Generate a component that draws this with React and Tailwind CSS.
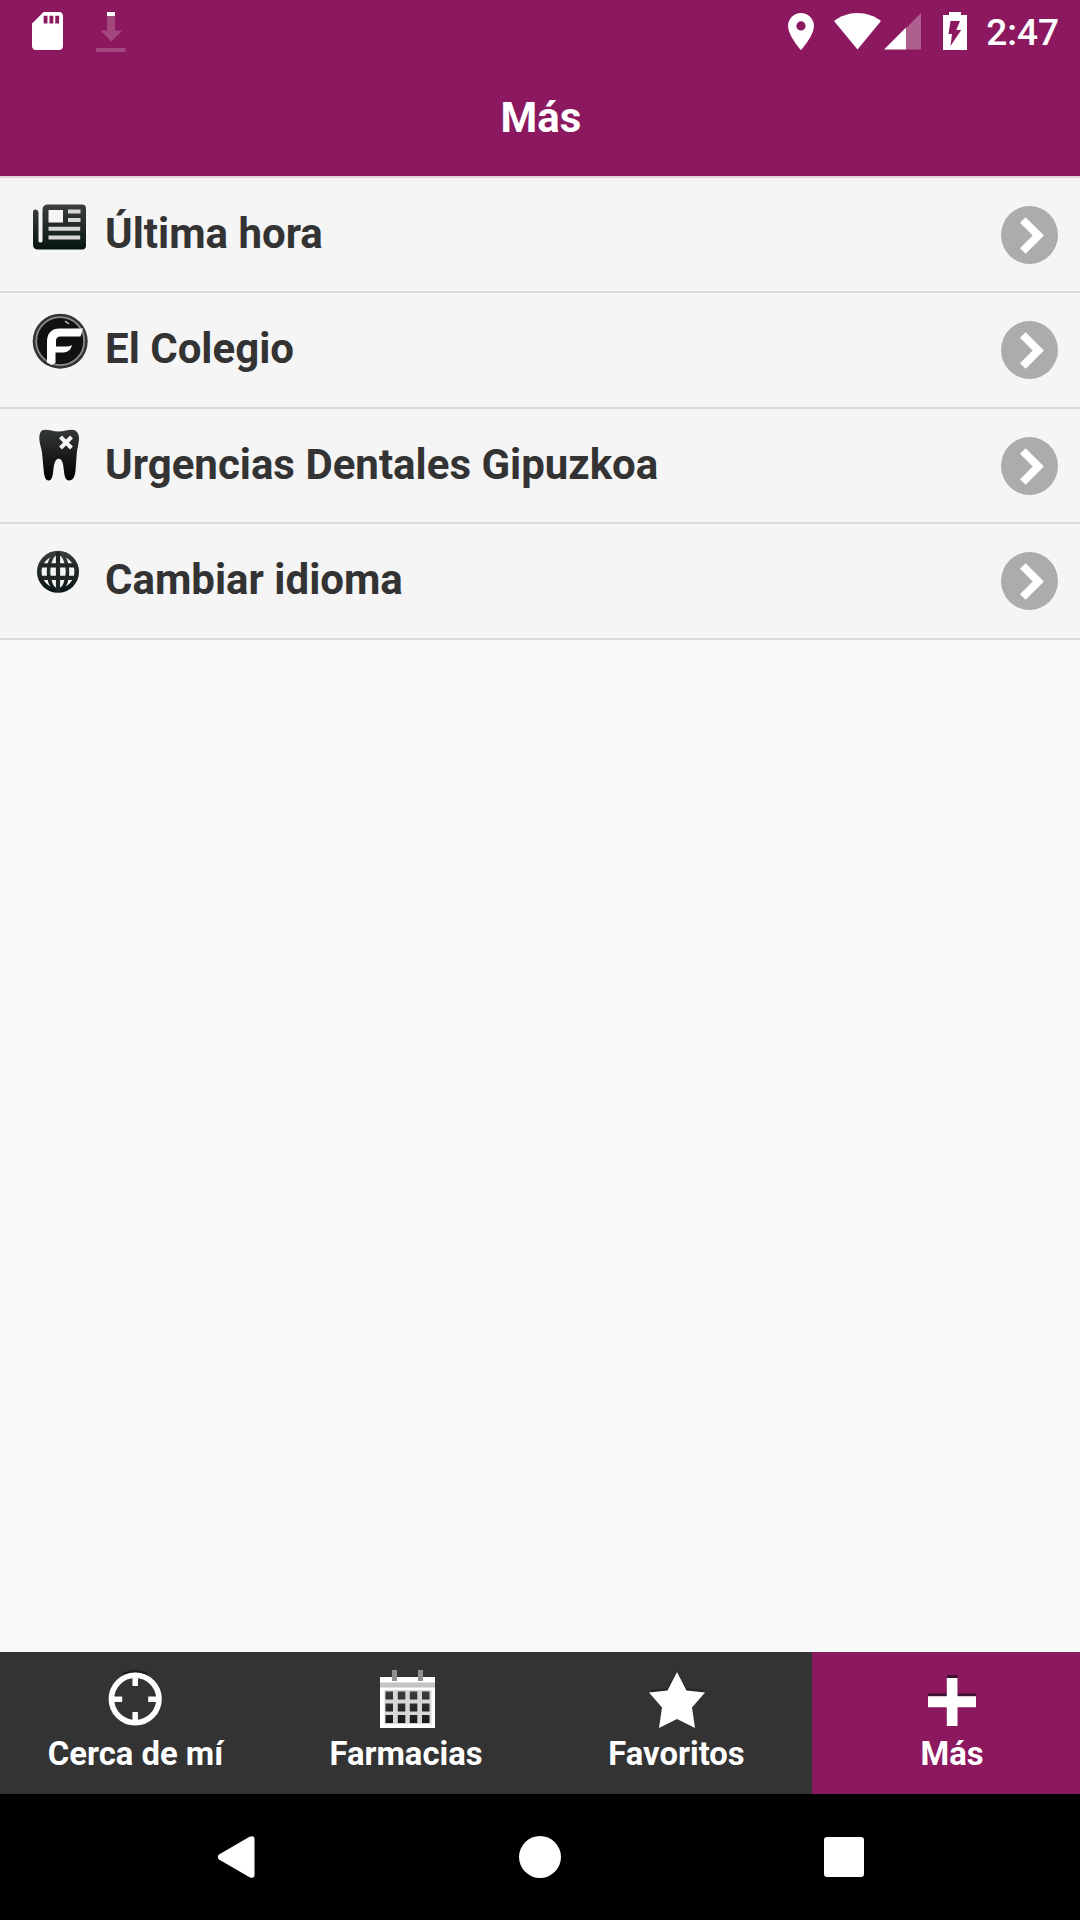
import React, { useState } from 'react';

const SdCardIcon = () => (
  <svg className="w-[31px] h-[38px]" viewBox="4 2 16 20" preserveAspectRatio="none" fill="#fff">
    <path d="M18 2h-8L4.02 8 4 20c0 1.1.9 2 2 2h12c1.1 0 2-.9 2-2V4c0-1.1-.9-2-2-2zm-6 6h-2V4h2v4zm3 0h-2V4h2v4zm3 0h-2V4h2v4z" />
  </svg>
);

const DownloadIcon = () => (
  <svg className="w-[30px] h-[40px]" viewBox="0 0 30 40" fill="#fff">
    <path d="M11 0h8v4h-8z" />
    <path fillOpacity="0.2" d="M11 4h8v14.500h7.500L15.200 29.500 4.500 18.500H11zM0 36h29.500v4H0z" />
  </svg>
);

const PlaceIcon = () => (
  <svg className="w-[26px] h-[37px]" viewBox="5 2 14 20" fill="#fff">
    <path d="M12 2C8.130 2 5 5.130 5 9c0 5.250 7 13 7 13s7-7.750 7-13c0-3.870-3.130-7-7-7zm0 9.500a2.500 2.500 0 0 1 0-5 2.500 2.500 0 0 1 0 5z" />
  </svg>
);

const WifiIcon = () => (
  <svg className="w-[47px] h-[37px]" viewBox="0 0 47 37" fill="#fff">
    <path d="M23.500 36.500 0 8C6.500 3 14.500 0 23.500 0S40.500 3 47 8z" />
  </svg>
);

const SignalIcon = () => (
  <svg className="w-[37px] h-[37px]" viewBox="0 0 37 37" fill="#fff">
    <path fillOpacity="0.3" d="M22 15 37 0v36.500H22z" />
    <path d="M0 36.500 22 14.500v22z" />
  </svg>
);

const BatteryIcon = () => (
  <svg className="w-[24px] h-[38px]" viewBox="0 0 24 38" fill="#fff" fillRule="evenodd">
    <path d="M6 0h12v3h6v35H0V3h6zM7.500 9h9.500l-3.700 9h5L7.500 34l1.500-12H5.500z" />
  </svg>
);

const NewsIcon = () => (
  <svg className="w-14 h-14" viewBox="0 0 56 56" fill="none">
    <defs>
      <linearGradient id="news" x1="0" y1="0" x2="0" y2="1">
        <stop offset="0" stopColor="#3c3e3e" />
        <stop offset="1" stopColor="#061512" />
      </linearGradient>
    </defs>
    <path fill="url(#news)" d="M16 6.500h34q4 0 4 4v37q0 4-4 4H6q-5 0-5-5V14q0-2.500 2.500-2.500T6.500 14v29q0 1.500 2 1.500t2-1.500V12q0-5.500 5.500-5.500z" />
    <path fill="#f5f5f5" d="M16.500 12h14.500v12.500H16.500z" />
    <path fill="#d8d8d8" d="M36 11.500h12.500v4H36zM36 20h12.500v4H36zM16.500 28.800h31.700v4H16.500zM16.500 37.500h31.700v4H16.500z" />
  </svg>
);

const ColegioIcon = () => (
  <svg className="w-14 h-14" viewBox="0 0 56 56" fill="none">
    <circle cx="28.200" cy="28.200" r="27.500" fill="#333" />
    <circle cx="28.200" cy="28.200" r="24" fill="#111" stroke="#8c8c8c" strokeWidth="1.800" />
    <path fill="#fff" d="M51 15.500 48.500 23.500H28.500q-4.500 0-4.500 4.500v5.500h10q3.500 0 6-1.500-1.500 7-8 7.500H23.500V50l-4 2L15 49.500V29q0-13.500 13-13.500z" />
    <path stroke="#ccc" strokeWidth="1.200" d="m33 8 4 3" />
  </svg>
);

const ToothIcon = () => (
  <svg className="w-14 h-14" viewBox="0 0 56 56" fill="none">
    <defs>
      <linearGradient id="tooth" x1="0" y1="0" x2="0" y2="1">
        <stop offset="0" stopColor="#353838" />
        <stop offset="1" stopColor="#000" />
      </linearGradient>
    </defs>
    <path fill="url(#tooth)" d="M13 .8c5 0 8 1.700 13.500 1.700S36 .8 40 .8s7 3 7 8.700c0 5-1.800 9-2.200 15l-1.300 17c-.5 6-2.500 10-6.500 10-3.600 0-4.500-4.500-5-9-.7-7-1.500-12.700-5.300-12.700s-4.700 5.700-5.500 12.700c-.6 4.500-1.300 9-4.500 9-3.400 0-4.500-4-5-10l-1.600-17c-.6-6-2.800-10-2.800-15C7.300 4 9 .8 13 .8z" />
    <path stroke="#f5f5f5" strokeWidth="4" d="m28.500 8 11 11M39.500 8l-11 11" />
  </svg>
);

const GlobeIcon = () => (
  <svg className="w-14 h-14" viewBox="0 0 56 56" fill="none">
    <defs>
      <linearGradient id="globe" x1="0" y1="0" x2="0" y2="1">
        <stop offset="0" stopColor="#3a3c3c" />
        <stop offset="1" stopColor="#081716" />
      </linearGradient>
    </defs>
    <circle cx="26" cy="27.800" r="18.700" stroke="url(#globe)" strokeWidth="4.600" />
    <ellipse cx="26" cy="27.800" rx="9.500" ry="18.500" stroke="url(#globe)" strokeWidth="3.500" />
    <path stroke="#202626" strokeWidth="4.200" d="M26 8v39.500M9 21.300h34M9 33.800h34" />
  </svg>
);

const ArrowIcon = () => (
  <svg className="w-[57px] h-[58px]" viewBox="0 0 57 58" fill="none">
    <ellipse cx="28.500" cy="29" rx="28.500" ry="29" fill="#acacac" />
    <path stroke="#fff" strokeWidth="8" d="M21.800 14 37.300 29.500 21.800 45" />
  </svg>
);

const TargetIcon = () => (
  <svg className="w-14 h-[58px]" viewBox="0.8 0 56 58" fill="none" stroke="#fff">
    <path stroke="#1c1c1c" strokeWidth="2" d="M16 4a27 27 0 0 1 24 0" />
    <circle cx="28" cy="29" r="23.800" strokeWidth="5.600" />
    <path strokeWidth="5.500" d="M28 5v11M28 42v11M4 29.300h11M41 29.300h11" />
  </svg>
);

const CalendarIcon = () => (
  <svg className="w-14 h-[58px] overflow-visible" viewBox="0 0 56 58">
    <defs>
      <linearGradient id="cells" x1="0" y1="21" x2="0" y2="53" gradientUnits="userSpaceOnUse">
        <stop offset="0" stopColor="#3c3c3c" />
        <stop offset="1" stopColor="#181818" />
      </linearGradient>
    </defs>
    <path fill="#fff" d="M2 7h55v51H2z" />
    <path fill="#c4c4c4" d="M2 12.500h55v5H2z" />
    <path fill="#d6d6d6" d="M6.500 20h47v34h-47z" />
    <path fill="#909090" d="M14 0h5v11h-5zM40 0h5v11h-5z" />
    <path
      fill="url(#cells)"
      d="M7.500 21.500h7.500v8H7.500zM19.800 21.500h7.500v8h-7.500zM31.800 21.500h7.500v8h-7.500zM44 21.500h7.500v8H44zM7.500 33.500h7.500v8H7.500zM19.800 33.500h7.500v8h-7.500zM31.800 33.500h7.500v8h-7.500zM44 33.500h7.500v8H44zM7.500 45h7.500v8H7.500zM19.800 45h7.500v8h-7.500zM31.800 45h7.500v8h-7.500zM44 45h7.500v8H44z"
    />
  </svg>
);

const StarIcon = () => (
  <svg className="w-14 h-[58px] overflow-visible" viewBox="1 0 56 58">
    <path fill="#262626" d="m29 0 9 18 17 2v3H3v-3l17-2z" />
    <path fill="#fff" d="m29 2 9.500 18.500L57 22.500 44 37.500 47 58 29 49 11 58l3-20.500L1 22.500l18.500-2z" />
  </svg>
);

const PlusIcon = () => (
  <svg className="w-14 h-[58px]" viewBox="0 0 56 58">
    <path fill="#3d1230" d="M23 5h10.500v18.500H52V26H4v-2.500h19z" />
    <path fill="#fff" d="M22.800 8h10.700v18.200H52v11H33.500V56H22.800V37.200H4v-11h18.800z" />
  </svg>
);

const menuItems = [
  { label: 'Última hora', icon: NewsIcon, height: 'h-[115px]' },
  { label: 'El Colegio', icon: ColegioIcon, height: 'h-[116px]' },
  { label: 'Urgencias Dentales Gipuzkoa', icon: ToothIcon, height: 'h-[115px]' },
  { label: 'Cambiar idioma', icon: GlobeIcon, height: 'h-[116px]' },
];

const tabs = [
  { id: 'cerca', label: 'Cerca de mí', icon: TargetIcon },
  { id: 'farmacias', label: 'Farmacias', icon: CalendarIcon },
  { id: 'favoritos', label: 'Favoritos', icon: StarIcon },
  { id: 'mas', label: 'Más', icon: PlusIcon },
];

function StatusBar() {
  return (
    <div className="flex items-start h-[63px] pt-3 pl-8 pr-[21px]">
      <SdCardIcon />
      <div className="ml-[33px]">
        <DownloadIcon />
      </div>
      <div className="flex items-start ml-auto">
        <div className="pt-px"><PlaceIcon /></div>
        <div className="ml-5 pt-px"><WifiIcon /></div>
        <div className="ml-[3px] pt-px"><SignalIcon /></div>
        <div className="ml-[22px]"><BatteryIcon /></div>
        <span className="ml-[19px] text-[37px] leading-[42px] font-medium">2:47</span>
      </div>
    </div>
  );
}

function App() {
  const [activeTab, setActiveTab] = useState('mas');

  return (
    <div className="flex flex-col w-[1080px] h-[1920px] bg-[#f9f9f9] font-['Roboto',sans-serif] overflow-hidden">
      <header className="h-[176px] bg-[#8c195f] text-white">
        <StatusBar />
        <h1 className="pt-[30px] pl-[2px] text-center text-[42px] leading-[50px] font-bold">Más</h1>
      </header>

      <ul className="flex-1 border-t-2 border-[#e0d5dc]">
        {menuItems.map(({ label, icon: Icon, height }) => (
          <li
            key={label}
            className={`${height} flex items-start pl-8 pr-[22px] bg-[#f5f5f5] border-b-2 border-[#dadada] cursor-pointer`}
          >
            <div className="mt-5"><Icon /></div>
            <span className="ml-[17px] mt-[31px] text-[42px] leading-[50px] font-bold text-[#333]">{label}</span>
            <div className="ml-auto mt-7"><ArrowIcon /></div>
          </li>
        ))}
      </ul>

      <nav className="grid grid-cols-[271px_270px_271px_268px] h-[142px]">
        {tabs.map(({ id, label, icon: Icon }) => (
          <button
            key={id}
            type="button"
            onClick={() => setActiveTab(id)}
            className={`flex flex-col items-center pt-[18px] text-white ${
              activeTab === id ? 'bg-[#8c195f] pl-3' : 'bg-[#333]'
            }`}
          >
            <Icon />
            <span className="mt-[6px] text-[32.8px] leading-10 font-bold">{label}</span>
          </button>
        ))}
      </nav>

      {/* Android navigation keys */}
      <div className="flex items-center justify-between h-[126px] pl-[217px] pr-[216px] bg-black">
        <svg className="w-[38px] h-[42px]" viewBox="0 0 38 42" fill="#fff">
          <path d="M2 18.500 32.500.800Q37.500-1 37.500 3v36q0 4-5 2.200L2 23.500q-2.500-2.500 0-5z" />
        </svg>
        <div className="w-[42px] h-[42px] rounded-full bg-white" />
        <div className="w-10 h-10 rounded-[3px] bg-white" />
      </div>
    </div>
  );
}

export default App;
